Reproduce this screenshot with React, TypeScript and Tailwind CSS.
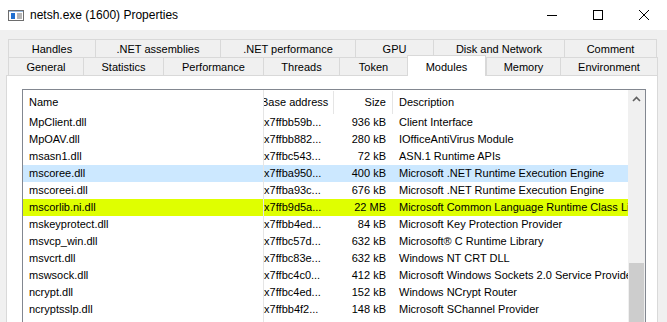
const topTabs = [
  { label: "Handles", w: "w-[87px]" },
  { label: ".NET assemblies", w: "w-[125px]" },
  { label: ".NET performance", w: "w-[135px]" },
  { label: "GPU", w: "w-[78px]" },
  { label: "Disk and Network", w: "w-[131px]" },
  { label: "Comment", w: "w-[93px] border-r" },
];

const bottomTabs = [
  { label: "General", w: "w-[75px]" },
  { label: "Statistics", w: "w-[80px]" },
  { label: "Performance", w: "w-[100px]" },
  { label: "Threads", w: "w-[76px]" },
  { label: "Token", w: "w-[68px]" },
  { label: "Modules", w: "w-[79px]", active: true },
  { label: "Memory", w: "w-[74px]" },
  { label: "Environment", w: "w-[98px] border-r" },
];

const modules = [
  ["MpClient.dll", "0x7ffbb59b...", "936 kB", "Client Interface", ""],
  ["MpOAV.dll", "0x7ffbb882...", "280 kB", "IOfficeAntiVirus Module", ""],
  ["msasn1.dll", "0x7ffbc543...", "72 kB", "ASN.1 Runtime APIs", ""],
  ["mscoree.dll", "0x7ffba950...", "400 kB", "Microsoft .NET Runtime Execution Engine", "bg-[#cce8ff]"],
  ["mscoreei.dll", "0x7ffba93c...", "676 kB", "Microsoft .NET Runtime Execution Engine", ""],
  ["mscorlib.ni.dll", "0x7ffb9d5a...", "22 MB", "Microsoft Common Language Runtime Class Library", "bg-[#dfff00]"],
  ["mskeyprotect.dll", "0x7ffbb4ed...", "84 kB", "Microsoft Key Protection Provider", ""],
  ["msvcp_win.dll", "0x7ffbc57d...", "632 kB", "Microsoft® C Runtime Library", ""],
  ["msvcrt.dll", "0x7ffbc83e...", "632 kB", "Windows NT CRT DLL", ""],
  ["mswsock.dll", "0x7ffbc4c0...", "412 kB", "Microsoft Windows Sockets 2.0 Service Provider", ""],
  ["ncrypt.dll", "0x7ffbc4ed...", "152 kB", "Windows NCrypt Router", ""],
  ["ncryptsslp.dll", "0x7ffbb4f2...", "148 kB", "Microsoft SChannel Provider", ""],
];

function WindowIcon() {
  return (
    <svg width="16" height="12" viewBox="0 0 16 12" className="shrink-0">
      <rect x="0.5" y="0.5" width="15" height="10" fill="#fff" stroke="#6d6d6d" />
      <rect x="1" y="1" width="14" height="1" fill="#9bbbe0" />
      <rect x="3" y="3" width="4" height="6" fill="#1f6fd0" />
      <rect x="9" y="3.5" width="5" height="1" fill="#6d6d6d" />
      <rect x="9" y="5.5" width="5" height="1" fill="#6d6d6d" />
      <rect x="9" y="7.5" width="5" height="1" fill="#6d6d6d" />
    </svg>
  );
}

export default function App() {
  return (
    <div className="h-[322px] w-[667px] overflow-hidden bg-[#f0f0f0] font-['Liberation_Sans',Arial,sans-serif] text-[11px] text-black">
      {/* Title bar */}
      <div className="flex h-[30px] items-center bg-white">
        <div className="ml-[8px] mt-[1px] flex items-center">
          <WindowIcon />
        </div>
        <span className="ml-[6px] text-[12px]">netsh.exe (1600) Properties</span>
        <div className="ml-auto flex h-full items-center">
          <div className="flex w-[46px] justify-center">
            <svg width="10" height="10" viewBox="0 0 10 10">
              <line x1="0" y1="5.5" x2="10" y2="5.5" stroke="#000" />
            </svg>
          </div>
          <div className="flex w-[46px] justify-center">
            <svg width="10" height="10" viewBox="0 0 10 10">
              <rect x="0.5" y="0.5" width="9" height="9" fill="none" stroke="#000" />
            </svg>
          </div>
          <div className="flex w-[46px] justify-center">
            <svg width="10" height="10" viewBox="0 0 10 10">
              <path d="M0 0 L10 10 M10 0 L0 10" stroke="#000" strokeWidth="1" />
            </svg>
          </div>
        </div>
      </div>

      {/* Tabs */}
      <div className="ml-[8px] mt-[9px]">
        <div className="flex h-[18px]">
          {topTabs.map((t) => (
            <div
              key={t.label}
              className={`${t.w} flex items-center justify-center border-t border-l border-[#d9d9d9] pt-[1px]`}
            >
              {t.label}
            </div>
          ))}
        </div>
        <div className="flex h-[18px] items-start">
          {bottomTabs.map((t) =>
            t.active ? (
              <div
                key={t.label}
                className={`${t.w} relative z-10 -mt-[2px] flex h-[21px] justify-center border-x border-t border-[#d9d9d9] bg-white pt-[3px]`}
              >
                {t.label}
              </div>
            ) : (
              <div
                key={t.label}
                className={`${t.w} flex h-[18px] items-center justify-center border-t border-l border-[#d9d9d9] pt-[1px]`}
              >
                {t.label}
              </div>
            )
          )}
        </div>
      </div>

      {/* Panel */}
      <div className="ml-[6px] h-[300px] w-[652px] border border-[#d9d9d9] bg-white">
        <div className="ml-[15px] mt-[13px] flex h-[260px] w-[624px] border border-[#828790]">
          <div className="relative w-[605px] overflow-hidden">
            {/* frozen column divider */}
            <div className="absolute top-0 bottom-0 left-[240px] w-px bg-[#e5e5e5]" />
            {/* Header */}
            <div className="flex h-[24px] items-center">
              <div className="w-[240px] pl-[6px]">Name</div>
              <div className="w-px" />
              <div className="w-[69px] overflow-hidden whitespace-nowrap">
                <span className="-ml-[3px] inline-block">Base address</span>
              </div>
              <div className="flex h-[23px] w-[59px] items-center justify-end border-l border-[#e5e5e5] pr-[6px]">
                Size
              </div>
              <div className="flex h-[23px] flex-1 items-center border-l border-[#e5e5e5] pl-[6px]">
                Description
              </div>
            </div>
            {/* Rows */}
            {modules.map(([name, addr, size, desc, bg]) => (
              <div key={name} className={`flex h-[17px] items-center whitespace-nowrap ${bg}`}>
                <div className="w-[240px] pl-[6px]">{name}</div>
                <div className="w-px" />
                <div className="w-[69px] overflow-hidden">
                  <span className="-ml-[6px] inline-block">{addr}</span>
                </div>
                <div className="w-[59px] pr-[6px] text-right">{size}</div>
                <div className="flex-1 overflow-hidden pl-[7px]">{desc}</div>
              </div>
            ))}
          </div>
          {/* Scrollbar */}
          <div className="flex w-[17px] flex-col bg-[#f0f0f0]">
            <div className="flex h-[17px] items-center justify-center">
              <svg width="9" height="6" viewBox="0 0 9 6">
                <path d="M1 5 L4.5 1.5 L8 5" fill="none" stroke="#606060" strokeWidth="1.6" />
              </svg>
            </div>
            <div className="h-[156px]" />
            <div className="mx-[1px] flex-1 bg-[#cdcdcd]" />
          </div>
        </div>
      </div>
    </div>
  );
}
